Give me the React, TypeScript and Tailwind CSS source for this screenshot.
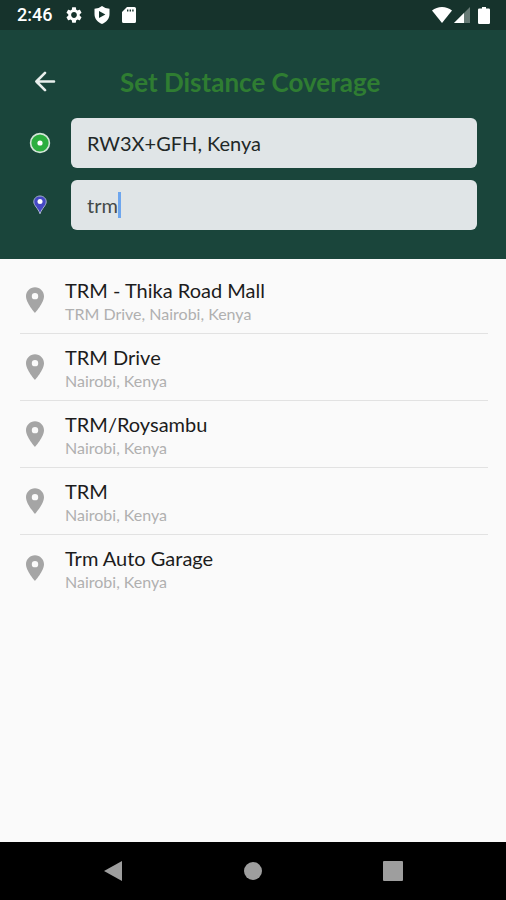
import { useState } from 'react';

const places = [
  { name: 'TRM - Thika Road Mall', area: 'TRM Drive, Nairobi, Kenya' },
  { name: 'TRM Drive', area: 'Nairobi, Kenya' },
  { name: 'TRM/Roysambu', area: 'Nairobi, Kenya' },
  { name: 'TRM', area: 'Nairobi, Kenya' },
  { name: 'Trm Auto Garage', area: 'Nairobi, Kenya' },
];

function StatusBar() {
  return (
    <div className="flex h-[30px] items-center justify-between bg-[#16332c] pl-[17px] pr-4 text-white">
      <div className="flex items-center">
        <span className="w-9 font-['Roboto',sans-serif] text-lg font-medium leading-5">2:46</span>
        <svg viewBox="2 2 20 20" className="ml-[13px] h-4 w-4" fill="currentColor">
          <path d="M19.14 12.94c.04-.3.06-.61.06-.94 0-.32-.02-.64-.07-.94l2.03-1.58c.18-.14.23-.41.12-.61l-1.92-3.32c-.12-.22-.37-.29-.59-.22l-2.39.96c-.5-.38-1.03-.7-1.62-.94l-.36-2.54c-.04-.24-.24-.41-.48-.41h-3.84c-.24 0-.43.17-.47.41l-.36 2.54c-.59.24-1.13.57-1.62.94l-2.39-.96c-.22-.08-.47 0-.59.22L2.74 8.87c-.12.21-.08.47.12.61l2.03 1.58c-.05.3-.09.63-.09.94s.02.64.07.94l-2.03 1.58c-.18.14-.23.41-.12.61l1.92 3.32c.12.22.37.29.59.22l2.39-.96c.5.38 1.03.7 1.62.94l.36 2.54c.05.24.24.41.48.41h3.84c.24 0 .44-.17.47-.41l.36-2.54c.59-.24 1.13-.56 1.62-.94l2.39.96c.22.08.47 0 .59-.22l1.92-3.32c.12-.22.07-.47-.12-.61l-2.01-1.58zM12 15.6c-1.98 0-3.6-1.62-3.6-3.6s1.62-3.6 3.6-3.6 3.6 1.62 3.6 3.6-1.62 3.6-3.6 3.6z" />
        </svg>
        <svg viewBox="0 0 16 18" className="ml-3 h-[18px] w-4" fill="currentColor" fillRule="evenodd">
          <path d="M8 0 Q11 2.4 15.5 2.8 V8 C15.5 12.6 12.6 16.3 8 18 C3.4 16.3 0.5 12.6 0.5 8 V2.8 Q5 2.4 8 0 Z M5 5 V12 L11.4 8.5 Z" />
        </svg>
        <svg viewBox="0 0 14 16" className="ml-3 h-4 w-3.5" fill="currentColor" fillRule="evenodd">
          <path d="M5 0 H12.4 Q14 0 14 1.6 V14.4 Q14 16 12.4 16 H1.6 Q0 16 0 14.4 V5 Z M5 2.4 V4.6 H6.4 V2.4 Z M7.6 2.4 V4.6 H9 V2.4 Z M10.2 2.4 V4.6 H11.6 V2.4 Z" />
        </svg>
      </div>
      <div className="flex items-center">
        <svg viewBox="0 0 20 16" className="h-4 w-5" fill="currentColor">
          <path d="M10 16 L0 3.6 Q4.4 0 10 0 Q15.6 0 20 3.6 Z" />
        </svg>
        <svg viewBox="0 0 16 16" className="ml-0.5 h-4 w-4" fill="currentColor">
          <path d="M0 16 L16 0 V16 Z" opacity="0.35" />
          <path d="M0 16 L10 6 V16 Z" />
        </svg>
        <svg viewBox="0 0 12 17" className="ml-2 h-[17px] w-3" fill="currentColor">
          <path d="M4 0 H8 V1.6 H10.8 Q12 1.6 12 2.8 V15.8 Q12 17 10.8 17 H1.2 Q0 17 0 15.8 V2.8 Q0 1.6 1.2 1.6 H4 Z" />
        </svg>
      </div>
    </div>
  );
}

function OriginIcon() {
  return (
    <svg viewBox="0 0 22 22" className="h-[22px] w-[22px]">
      <circle cx="11" cy="11" r="9.4" fill="#2cae3f" stroke="#d3e5d8" strokeWidth="1.6" />
      <circle cx="11" cy="11" r="2.6" fill="#fff" />
    </svg>
  );
}

function DestinationIcon() {
  return (
    <svg viewBox="0 0 14 20" className="h-5 w-3.5">
      <path
        d="M7 1 C3.4 1 0.8 3.5 0.8 6.8 C0.8 10.6 5 13 7 18.8 C9 13 13.2 10.6 13.2 6.8 C13.2 3.5 10.6 1 7 1 Z"
        fill="#4548c4"
        stroke="#a9b4cf"
        strokeWidth="1"
      />
      <circle cx="7" cy="6.4" r="2.5" fill="#fff" />
    </svg>
  );
}

function PlacePin() {
  return (
    <svg viewBox="5 2 14 20" className="h-[26px] w-[18px] shrink-0" fill="#a5a5a5">
      <path d="M12 2C8.13 2 5 5.13 5 9c0 5.25 7 13 7 13s7-7.75 7-13c0-3.87-3.13-7-7-7zm0 9.5a2.5 2.5 0 0 1 0-5 2.5 2.5 0 0 1 0 5z" />
    </svg>
  );
}

export default function App() {
  const [origin, setOrigin] = useState('RW3X+GFH, Kenya');
  const [destination, setDestination] = useState('trm');

  return (
    <div className="flex min-h-screen flex-col bg-[#fafafa] font-['Lato',sans-serif]">
      <StatusBar />

      <header className="bg-[#1a453b] pb-[29px] pl-7 pr-[29px] pt-8">
        <div className="flex h-10 items-center">
          <button type="button" aria-label="Back" className="flex h-10 w-[34px] items-center justify-center">
            <svg
              viewBox="0 0 22 22"
              className="h-[22px] w-[22px]"
              fill="none"
              stroke="#e9efed"
              strokeWidth="2.6"
              strokeLinecap="round"
              strokeLinejoin="round"
            >
              <path d="M20 10.5 H2.4 M11 1.8 L2.4 10.5 L11 19.2" />
            </svg>
          </button>
          <h1 className="ml-[58px] text-[26px] font-bold leading-10 text-[#2f7d32]">Set Distance Coverage</h1>
        </div>

        <div className="mt-4 flex flex-col gap-3">
          <div className="flex items-center">
            <div className="flex w-[43px] pl-px">
              <OriginIcon />
            </div>
            <input
              type="text"
              aria-label="Starting point"
              value={origin}
              onChange={(e) => setOrigin(e.target.value)}
              className="h-[50px] min-w-0 flex-1 rounded-md bg-[#e0e5e7] px-4 text-xl text-[#222827] outline-none"
            />
          </div>
          <div className="flex items-center">
            <div className="flex w-[43px] pl-[5px]">
              <DestinationIcon />
            </div>
            <label className="flex h-[50px] min-w-0 flex-1 cursor-text items-center rounded-md bg-[#e0e5e7] px-4">
              <input
                type="text"
                aria-label="Destination"
                value={destination}
                onChange={(e) => setDestination(e.target.value)}
                className="field-sizing-content text-xl text-[#444a49] caret-transparent outline-none"
              />
              <span className="h-[26px] w-[3px] bg-[#6ea6ee]" />
            </label>
          </div>
        </div>
      </header>

      <main className="flex-1 pl-5 pr-[18px] pt-2">
        <ul>
          {places.map((place) => (
            <li key={place.name} className="border-b border-[#e2e2e2] last:border-b-0">
              <button type="button" className="flex h-[66px] w-full items-center pl-1.5 text-left">
                <PlacePin />
                <span className="ml-[21px] flex flex-col pt-[3px]">
                  <span className="text-xl leading-6 text-[#1c1c1c]">{place.name}</span>
                  <span className="text-base leading-6 text-[#b0b0b0]">{place.area}</span>
                </span>
              </button>
            </li>
          ))}
        </ul>
      </main>

      <nav className="flex h-[58px] items-center justify-around bg-black px-[43px]">
        <button type="button" aria-label="Back">
          <svg viewBox="0 0 20 22" className="h-[22px] w-5" fill="#9e9e9e">
            <path d="M19 1 V21 L1 11 Z" />
          </svg>
        </button>
        <button type="button" aria-label="Home">
          <svg viewBox="0 0 20 20" className="h-5 w-5" fill="#9e9e9e">
            <circle cx="10" cy="10" r="9" />
          </svg>
        </button>
        <button type="button" aria-label="Recent apps">
          <svg viewBox="0 0 20 20" className="h-5 w-5" fill="#9e9e9e">
            <rect width="20" height="20" rx="1" />
          </svg>
        </button>
      </nav>
    </div>
  );
}
